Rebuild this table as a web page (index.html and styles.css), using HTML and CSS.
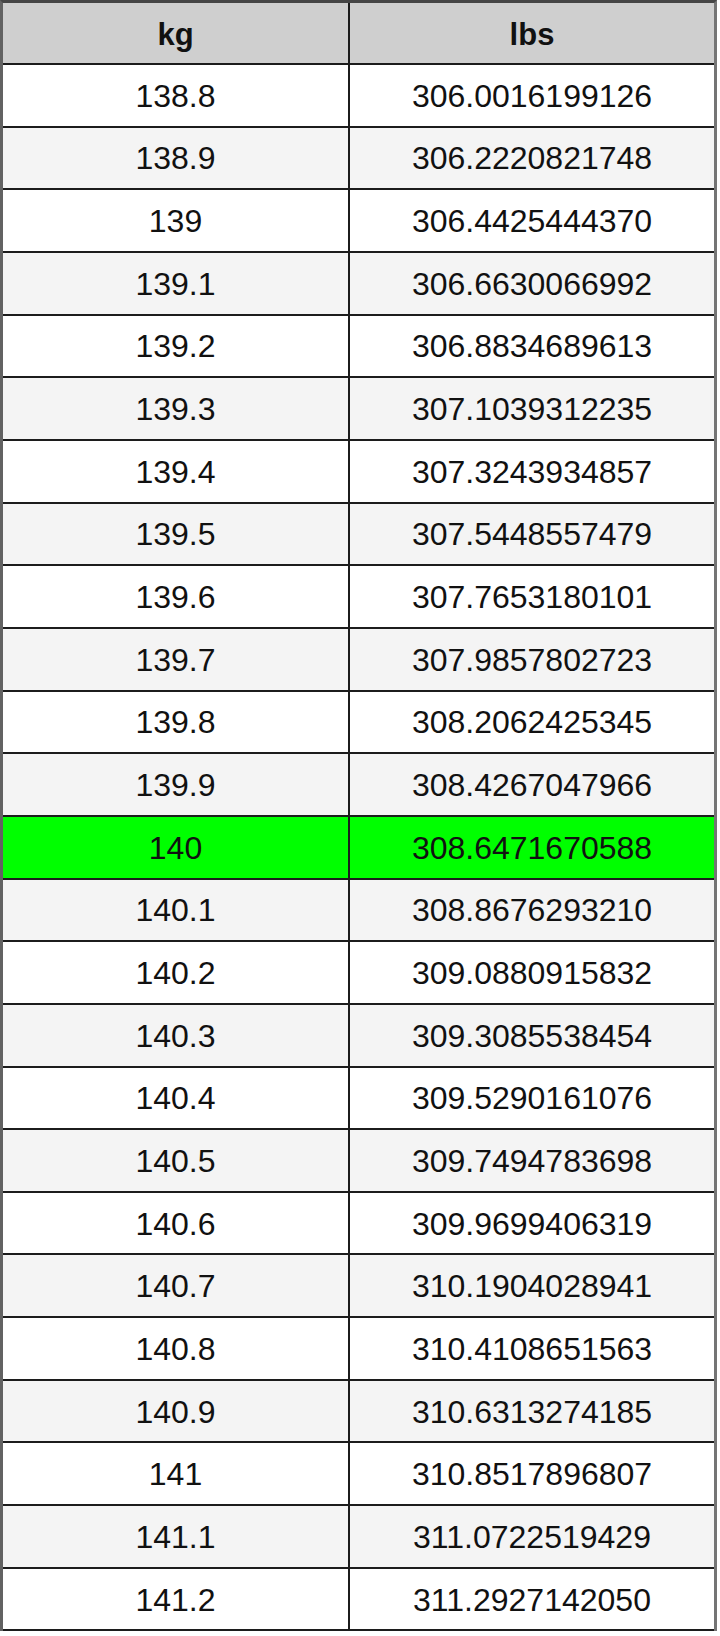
FILE: index.html
```html
<!DOCTYPE html>
<html lang="en">
<head>
<meta charset="utf-8">
<title>kg to lbs</title>
<link rel="stylesheet" href="styles.css">
</head>
<body>
<table class="conv">
  <thead>
    <tr><th class="c1">kg</th><th class="c2">lbs</th></tr>
  </thead>
  <tbody>
    <tr><td class="c1">138.8</td><td class="c2">306.0016199126</td></tr>
    <tr class="alt"><td class="c1">138.9</td><td class="c2">306.2220821748</td></tr>
    <tr><td class="c1">139</td><td class="c2">306.4425444370</td></tr>
    <tr class="alt"><td class="c1">139.1</td><td class="c2">306.6630066992</td></tr>
    <tr><td class="c1">139.2</td><td class="c2">306.8834689613</td></tr>
    <tr class="alt"><td class="c1">139.3</td><td class="c2">307.1039312235</td></tr>
    <tr><td class="c1">139.4</td><td class="c2">307.3243934857</td></tr>
    <tr class="alt"><td class="c1">139.5</td><td class="c2">307.5448557479</td></tr>
    <tr><td class="c1">139.6</td><td class="c2">307.7653180101</td></tr>
    <tr class="alt"><td class="c1">139.7</td><td class="c2">307.9857802723</td></tr>
    <tr><td class="c1">139.8</td><td class="c2">308.2062425345</td></tr>
    <tr class="alt"><td class="c1">139.9</td><td class="c2">308.4267047966</td></tr>
    <tr class="hl"><td class="c1">140</td><td class="c2">308.6471670588</td></tr>
    <tr class="alt"><td class="c1">140.1</td><td class="c2">308.8676293210</td></tr>
    <tr><td class="c1">140.2</td><td class="c2">309.0880915832</td></tr>
    <tr class="alt"><td class="c1">140.3</td><td class="c2">309.3085538454</td></tr>
    <tr><td class="c1">140.4</td><td class="c2">309.5290161076</td></tr>
    <tr class="alt"><td class="c1">140.5</td><td class="c2">309.7494783698</td></tr>
    <tr><td class="c1">140.6</td><td class="c2">309.9699406319</td></tr>
    <tr class="alt"><td class="c1">140.7</td><td class="c2">310.1904028941</td></tr>
    <tr><td class="c1">140.8</td><td class="c2">310.4108651563</td></tr>
    <tr class="alt"><td class="c1">140.9</td><td class="c2">310.6313274185</td></tr>
    <tr><td class="c1">141</td><td class="c2">310.8517896807</td></tr>
    <tr class="alt"><td class="c1">141.1</td><td class="c2">311.0722519429</td></tr>
    <tr><td class="c1">141.2</td><td class="c2">311.2927142050</td></tr>
  </tbody>
</table>
</body>
</html>
```
FILE: styles.css
```css
html, body {
  margin: 0;
  padding: 0;
  background: #ffffff;
}

.conv {
  border-collapse: separate;
  border-spacing: 0;
  width: 717px;
  table-layout: fixed;
  border-top: 3px solid #454545;
  border-left: 3px solid #626262;
  border-right: 3px solid #747474;
  font-family: "Liberation Sans", Arial, sans-serif;
  color: #111111;
}

.conv th,
.conv td {
  box-sizing: border-box;
  padding: 0;
  text-align: center;
  vertical-align: middle;
  border-bottom: 2px solid #1c1c1c;
  line-height: 1;
}

.conv .c1 {
  width: 347px;
  border-right: 2px solid #1c1c1c;
}

.conv th {
  height: 62px;
  background: #cfcfcf;
  font-size: 31px;
  font-weight: bold;
  padding-top: 2px;
}

.conv td {
  height: 62.67px;
  font-size: 32px;
  font-weight: normal;
  background: #ffffff;
  padding-top: 1px;
}

.conv tr.alt td {
  background: #f4f4f4;
}

.conv tr.hl td {
  background: #00ff00;
}
```
